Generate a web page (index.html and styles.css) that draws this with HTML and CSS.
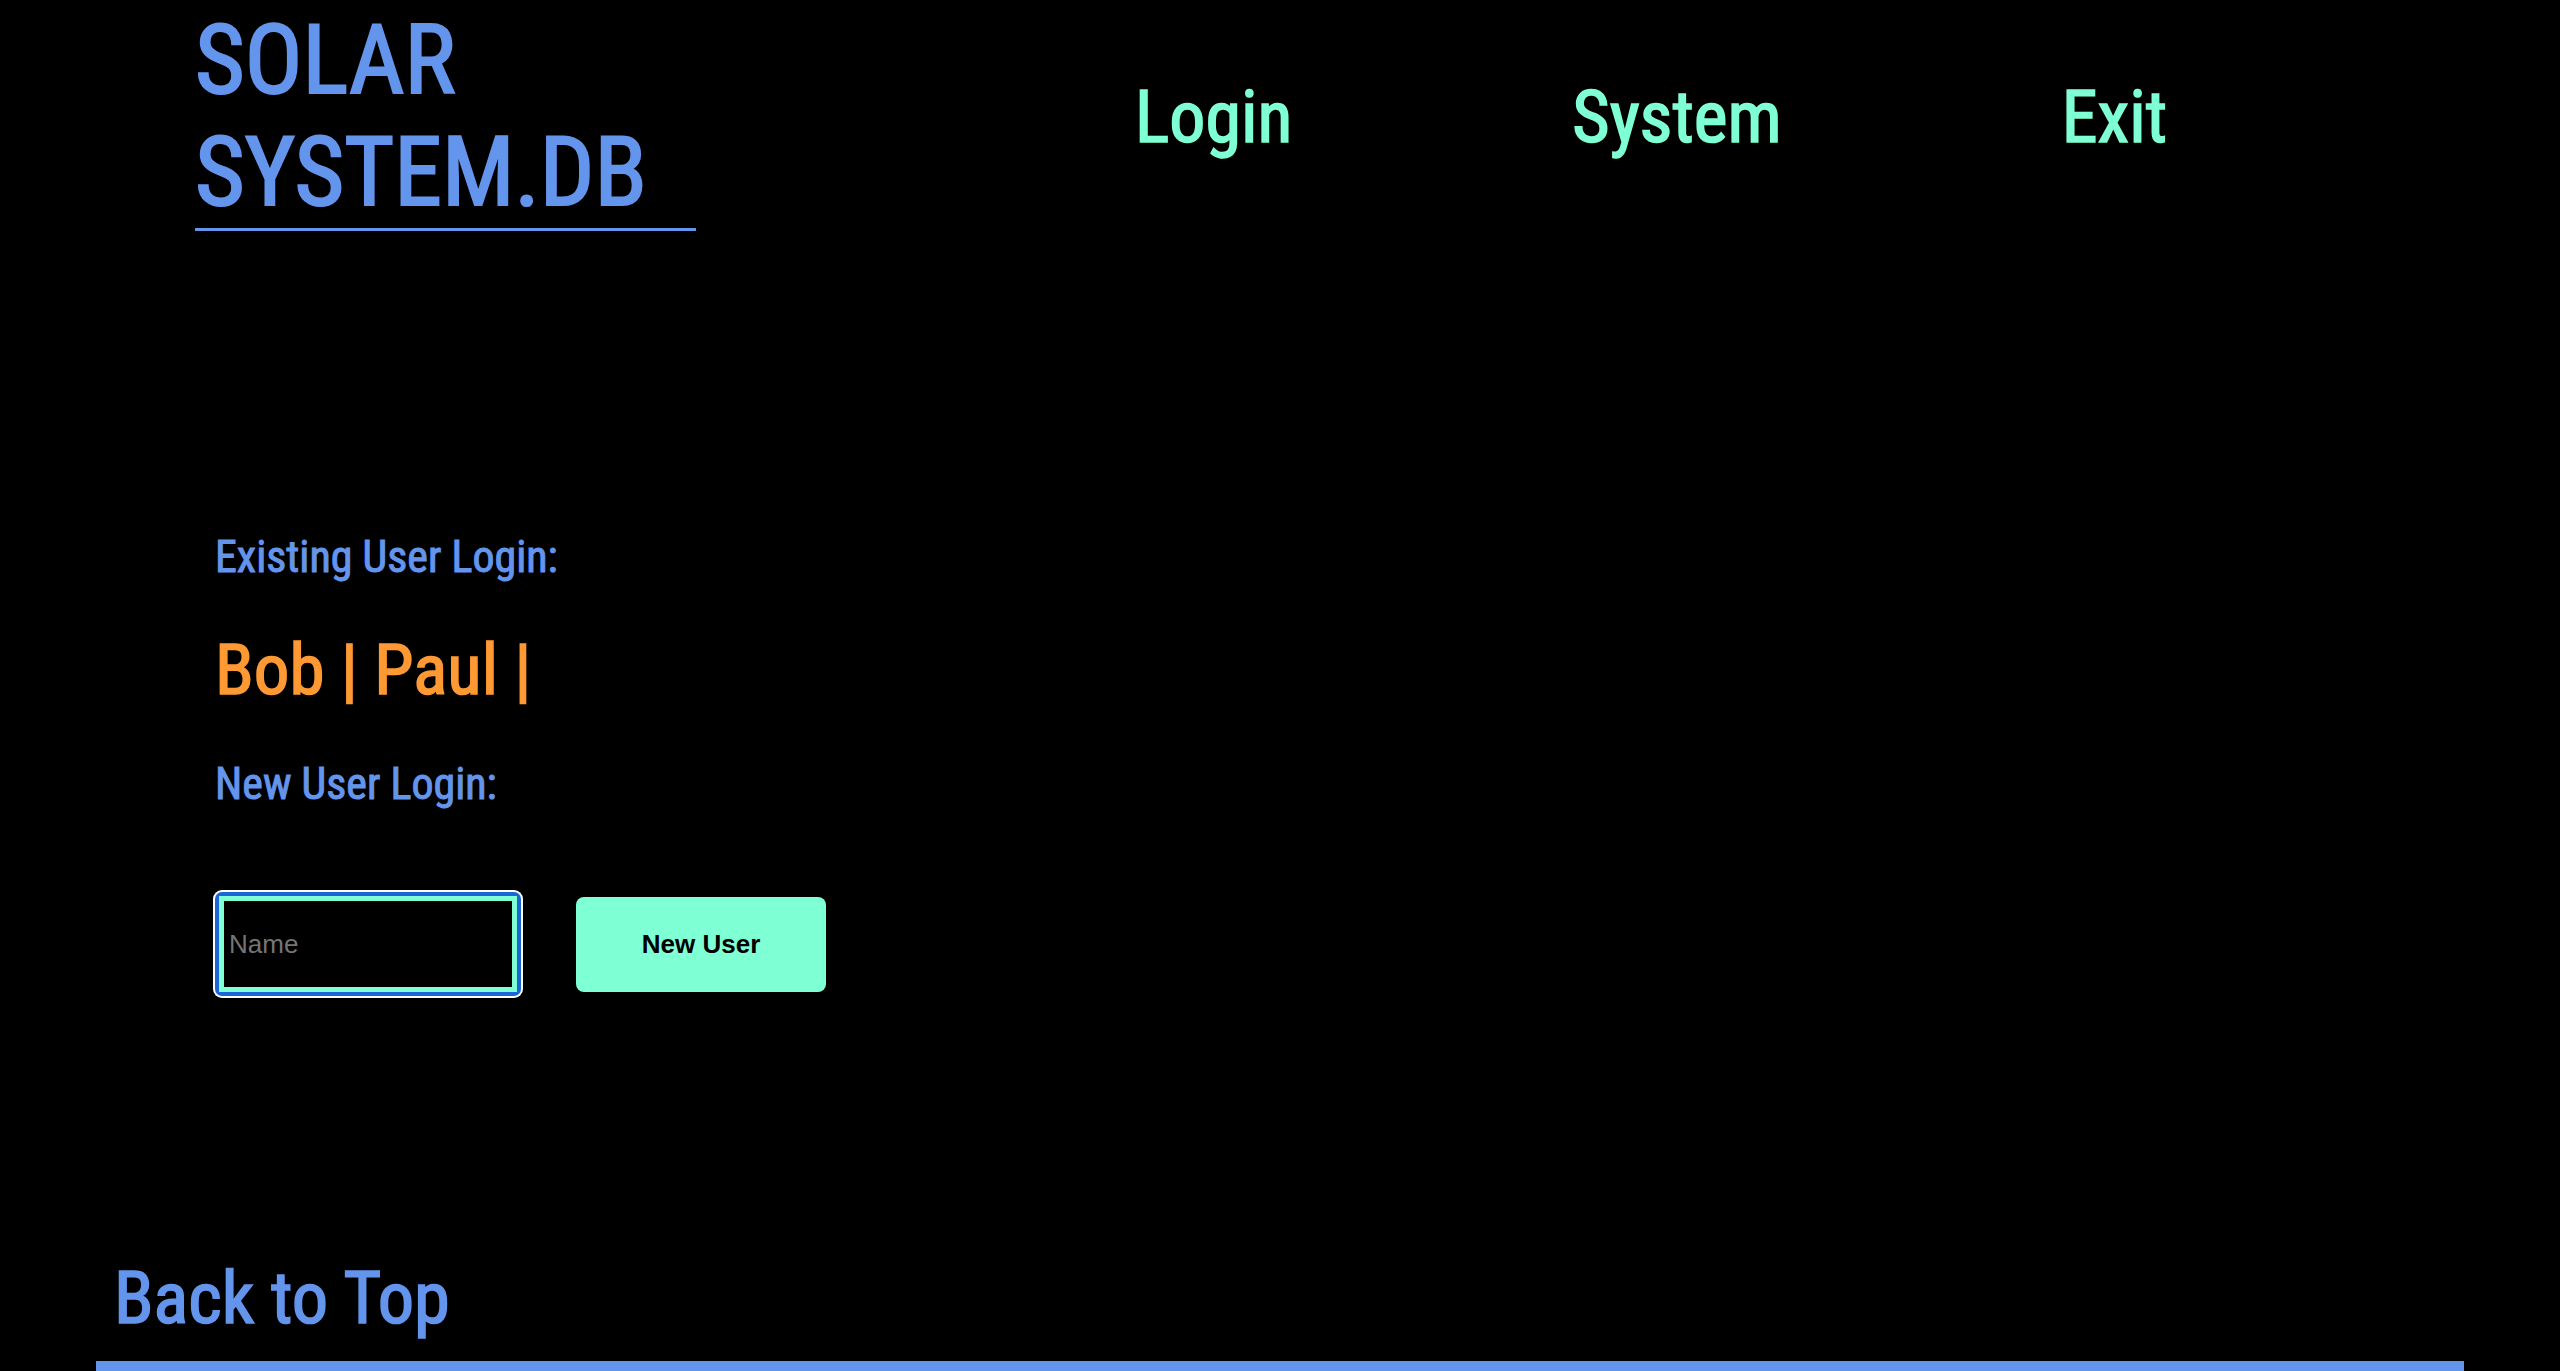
FILE: index.html
```html
<!DOCTYPE html>
<html lang="en">
<head>
<meta charset="utf-8">
<title>Solar System.DB</title>
<link rel="stylesheet" href="styles.css">
</head>
<body>
<header class="site-header">
  <h1 class="brand">SOLAR<br>SYSTEM.DB</h1>
  <nav class="main-nav">
    <a class="nav-link" href="#">Login</a>
    <a class="nav-link" href="#">System</a>
    <a class="nav-link" href="#">Exit</a>
  </nav>
</header>
<main class="login">
  <h2 class="label">Existing User Login:</h2>
  <p class="users"><a class="user" href="#">Bob</a> | <a class="user" href="#">Paul</a> |</p>
  <h2 class="label label-new">New User Login:</h2>
  <form class="new-user">
    <span class="focus-ring"><input class="name-input" type="text" placeholder="Name"></span>
    <button class="new-user-btn" type="button">New User</button>
  </form>
</main>
<footer class="site-footer">
  <a class="back-top" href="#">Back to Top</a>
  <div class="footer-bar"></div>
</footer>
</body>
</html>
```
FILE: styles.css
```css
html, body {
  margin: 0;
  padding: 0;
  background: #000;
}
body {
  font-family: "Roboto Condensed", "Roboto", sans-serif;
  font-stretch: condensed;
  font-weight: 400;
  overflow: hidden;
}
a {
  text-decoration: none;
  color: inherit;
}
.brand,
.nav-link,
.label,
.users,
.back-top {
  -webkit-text-stroke: 0.022em currentColor;
}
.site-header {
  display: flex;
  align-items: center;
  padding: 4px 0 0 195px;
}
.brand {
  margin: 0;
  width: 501px;
  font-size: 96px;
  line-height: normal;
  font-weight: 400;
  color: #6495ed;
  border-bottom: 3px solid #6495ed;
}
.main-nav {
  display: flex;
  gap: 280px;
  margin-left: 439px;
}
.nav-link {
  font-size: 72px;
  color: #7fffd4;
}
.login {
  padding: 300px 0 0 215px;
}
.label {
  margin: 0;
  font-size: 44px;
  font-weight: 400;
  color: #6495ed;
}
.users {
  margin: 45px 0 0;
  font-size: 71px;
  color: #ff9933;
}
.label-new {
  margin-top: 47px;
}
.new-user {
  display: flex;
  align-items: center;
  margin-top: 82px;
}
.focus-ring {
  display: inline-flex;
  padding: 4px;
  background: #1a66d6;
  border-radius: 7px;
  box-shadow: 0 0 0 2px #fff;
}
.name-input {
  box-sizing: border-box;
  width: 298px;
  height: 96px;
  border: 5px solid #7fffd4;
  background: #000;
  padding: 0 5px;
  font-family: "Liberation Sans", Arial, sans-serif;
  font-weight: 400;
  font-size: 26px;
  color: #fff;
  outline: none;
}
.name-input::placeholder {
  color: #757575;
}
.new-user-btn {
  width: 250px;
  height: 95px;
  margin-left: 55px;
  border: none;
  border-radius: 8px;
  background: #7fffd4;
  color: #000;
  font-family: "Liberation Sans", Arial, sans-serif;
  font-weight: 700;
  font-size: 26px;
}
.site-footer {
  padding: 260px 96px 0;
}
.back-top {
  display: block;
  width: max-content;
  margin-left: 18px;
  font-size: 72.5px;
  color: #6495ed;
}
.footer-bar {
  margin-top: 20px;
  height: 12px;
  background: #6495ed;
}
```
